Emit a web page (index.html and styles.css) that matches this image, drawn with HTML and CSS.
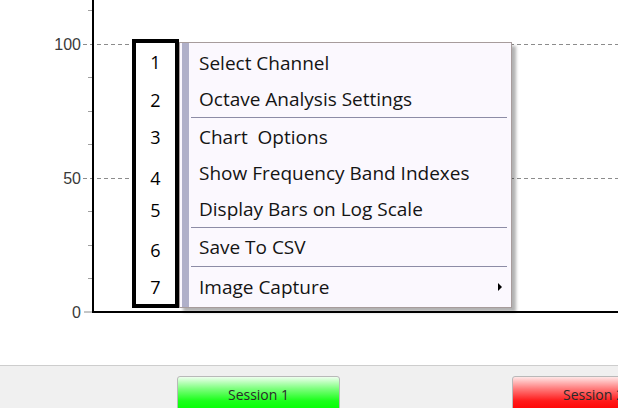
FILE: index.html
```html
<!DOCTYPE html>
<html>
<head>
<meta charset="utf-8">
<link rel="stylesheet" href="styles.css">
</head>
<body>
<div class="window">
  <div class="chart">
    <svg class="plot" width="618" height="365" viewBox="0 0 618 365">
      <line class="grid" x1="83" y1="44.5" x2="618" y2="44.5"/>
      <line class="grid" x1="83" y1="178.5" x2="618" y2="178.5"/>
      <line class="major" x1="84" y1="312" x2="92" y2="312"/>
      <line class="minor" x1="88" y1="10.5" x2="92" y2="10.5"/>
      <line class="minor" x1="88" y1="77.5" x2="92" y2="77.5"/>
      <line class="minor" x1="88" y1="111.5" x2="92" y2="111.5"/>
      <line class="minor" x1="88" y1="144.5" x2="92" y2="144.5"/>
      <line class="minor" x1="88" y1="211.5" x2="92" y2="211.5"/>
      <line class="minor" x1="88" y1="245.5" x2="92" y2="245.5"/>
      <line class="minor" x1="88" y1="278.5" x2="92" y2="278.5"/>
      <rect class="axis" x="92" y="0" width="2" height="313"/>
      <rect class="axis" x="92" y="311" width="526" height="2"/>
      <text class="tick-label" x="81" y="50">100</text>
      <text class="tick-label" x="81" y="184">50</text>
      <text class="tick-label" x="81" y="318">0</text>
    </svg>

    <ul class="context-menu">
      <li class="menu-item">Select Channel</li>
      <li class="menu-item">Octave Analysis Settings</li>
      <li class="menu-sep"></li>
      <li class="menu-item">Chart&nbsp; Options</li>
      <li class="menu-item">Show Frequency Band Indexes</li>
      <li class="menu-item">Display Bars on Log Scale</li>
      <li class="menu-sep"></li>
      <li class="menu-item">Save To CSV</li>
      <li class="menu-sep menu-sep-last"></li>
      <li class="menu-item has-sub">Image Capture<span class="sub-arrow"></span></li>
    </ul>

    <ol class="callouts">
      <li>1</li>
      <li>2</li>
      <li>3</li>
      <li>4</li>
      <li>5</li>
      <li>6</li>
      <li>7</li>
    </ol>
  </div>

  <div class="toolbar">
    <button class="session session-on">Session 1</button>
    <button class="session session-off">Session 2</button>
  </div>
</div>
</body>
</html>
```

FILE: styles.css
```css
html, body {
  margin: 0;
  padding: 0;
  background: #ffffff;
}

.window {
  width: 618px;
  height: 408px;
  overflow: hidden;
  display: flex;
  flex-direction: column;
}

.chart {
  position: relative;
  height: 365px;
  flex: none;
  background: #ffffff;
}

.plot {
  display: block;
}

.grid {
  stroke: #8c8c8c;
  stroke-width: 1;
  stroke-dasharray: 4 3;
}

.major {
  stroke: #8c8c8c;
  stroke-width: 1;
}

.minor {
  stroke: #a0a0a0;
  stroke-width: 1;
}

.axis {
  fill: #000000;
}

.tick-label {
  font-family: "Liberation Sans", Arial, sans-serif;
  font-size: 16px;
  fill: #3a3a3a;
  text-anchor: end;
}

/* context menu overlay */
.context-menu {
  position: absolute;
  left: 179px;
  top: 42px;
  width: 331px;
  margin: 0;
  padding: 2px 0;
  list-style: none;
  border: 1px solid #a79c9c;
  background: linear-gradient(to right, #fbf8fe 0 2px, #b0b0c9 2px 9px, #fbf8fe 9px);
  box-shadow: 4px 4px 3px rgba(0, 0, 0, 0.3);
  font-family: "Open Sans", "Segoe UI", sans-serif;
  font-size: 19px;
  color: #141414;
}

.menu-item {
  height: 36px;
  line-height: 36px;
  padding-left: 19px;
  padding-right: 9px;
  display: flex;
  align-items: center;
  justify-content: space-between;
  white-space: nowrap;
}

.menu-sep {
  height: 0;
  border-top: 1px solid #8d8ca6;
  margin: 0 4px 1px 11px;
}

.menu-sep-last {
  margin-top: 1px;
  margin-bottom: 2px;
}

.sub-arrow {
  width: 0;
  height: 0;
  border-top: 4px solid transparent;
  border-bottom: 4px solid transparent;
  border-left: 4px solid #000000;
}

/* annotation box */
.callouts {
  position: absolute;
  left: 132px;
  top: 39px;
  width: 39px;
  height: 261px;
  margin: 0;
  padding: 0;
  list-style: none;
  border: 4px solid #000000;
  background: #ffffff;
  font-family: "Open Sans", "Segoe UI", sans-serif;
  font-size: 18px;
  color: #000000;
  text-align: center;
}

.callouts li {
  height: 20px;
  line-height: 20px;
}

.callouts li:nth-child(1) { margin-top: 9px; }
.callouts li:nth-child(2) { margin-top: 18px; }
.callouts li:nth-child(3) { margin-top: 17px; }
.callouts li:nth-child(4) { margin-top: 21px; }
.callouts li:nth-child(5) { margin-top: 12px; }
.callouts li:nth-child(6) { margin-top: 20px; }
.callouts li:nth-child(7) { margin-top: 17px; }

/* bottom toolbar */
.toolbar {
  flex: 1;
  border-top: 1px solid #cdcdcd;
  background: #f0f0f0;
  padding: 10px 0 0 177px;
  display: flex;
  gap: 172px;
  align-items: flex-start;
}

.session {
  flex: none;
  width: 163px;
  height: 36px;
  margin: 0;
  padding: 0;
  border: 1px solid #b9b9b9;
  border-radius: 3px;
  font-family: "Open Sans", "Segoe UI", sans-serif;
  font-size: 14px;
  color: #2a2a2a;
  text-align: center;
  white-space: nowrap;
}

.session-on {
  background: linear-gradient(#eeffee, #7bff7b 35%, #1aff1a 70%, #00ff00);
}

.session-off {
  background: linear-gradient(#ffe6e6, #ff7a7a 35%, #ff1a1a 70%, #ff0000);
}
```
